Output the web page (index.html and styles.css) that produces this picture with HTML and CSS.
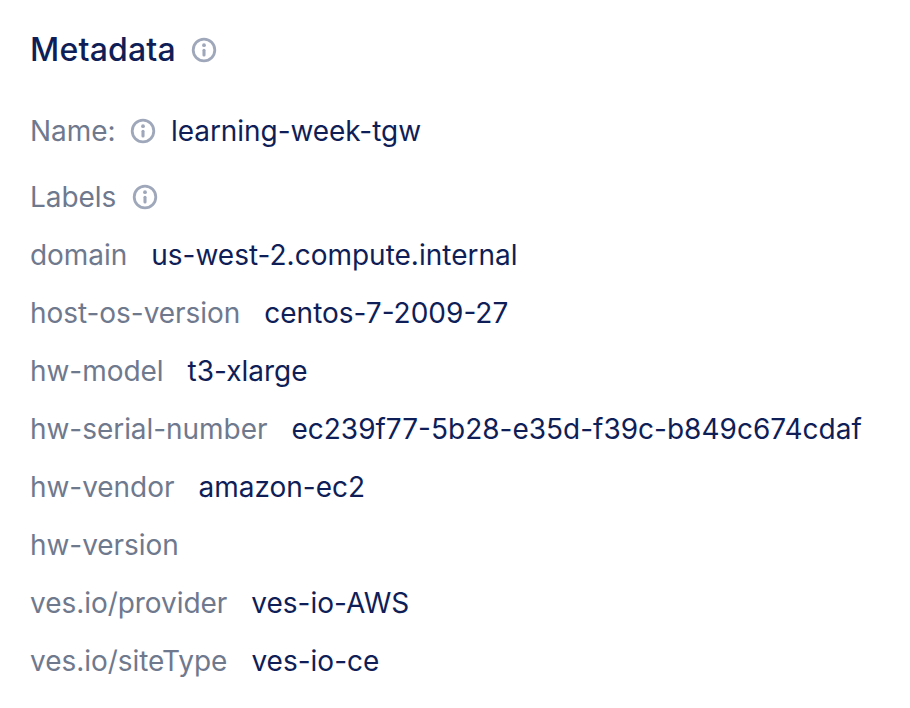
FILE: index.html
```html
<!DOCTYPE html>
<html lang="en">
<head>
<meta charset="utf-8">
<title>Metadata</title>
<link rel="stylesheet" href="styles.css">
</head>
<body>
<svg class="defs" aria-hidden="true"><symbol id="info" viewBox="0 0 24 24" overflow="visible"><circle cx="12" cy="12" r="10.8" fill="none" stroke="currentColor" stroke-width="2.8"/><circle cx="12" cy="7.2" r="1.9" fill="currentColor"/><path d="M12 12.2V17" fill="none" stroke="currentColor" stroke-width="3.1" stroke-linecap="round"/></symbol></svg>
<main class="metadata">
<header class="heading"><h1>Metadata</h1><svg class="icon"><use href="#info"/></svg></header>
<div class="name"><span class="key">Name:</span><svg class="icon"><use href="#info"/></svg><span class="value">learning-week-tgw</span></div>
<div class="labels"><span class="key">Labels</span><svg class="icon"><use href="#info"/></svg></div>
<dl class="list">
<div class="row"><dt>domain</dt><dd>us-west-2.compute.internal</dd></div>
<div class="row"><dt>host-os-version</dt><dd>centos-7-2009-27</dd></div>
<div class="row"><dt>hw-model</dt><dd>t3-xlarge</dd></div>
<div class="row"><dt>hw-serial-number</dt><dd>ec239f77-5b28-e35d-f39c-b849c674cdaf</dd></div>
<div class="row"><dt>hw-vendor</dt><dd>amazon-ec2</dd></div>
<div class="row"><dt>hw-version</dt><dd></dd></div>
<div class="row"><dt>ves.io/provider</dt><dd>ves-io-AWS</dd></div>
<div class="row"><dt>ves.io/siteType</dt><dd>ves-io-ce</dd></div>
</dl>
</main>
</body>
</html>
```
FILE: styles.css
```css
* { box-sizing: border-box; }
body { margin: 0; background: #fff; color: #0f1e57; font: 400 28px/34px Inter, sans-serif; }
.defs { position: absolute; width: 0; height: 0; }
.metadata { padding: 30px; white-space: nowrap; }
.heading, .name, .labels, .row { display: flex; align-items: center; }
.heading { height: 40px; gap: 16px; }
h1 { margin: 0; font-size: 32px; font-weight: 500; line-height: 40px; letter-spacing: 0.2px; }
.icon { flex: none; width: 24px; height: 24px; color: #9fa8ba; overflow: visible; }
.name .icon, .labels .icon { margin-bottom: 1px; }
.name { height: 34px; margin-top: 44px; gap: 16px; }
.name .key { margin-right: -0.5px; }
.name .value { letter-spacing: -0.06px; }
.labels { height: 34px; margin-top: 32px; gap: 16.5px; }
.key, dt { color: #6f798e; letter-spacing: -0.05px; }
.list { margin: 12px 0 0; }
.row { height: 58px; gap: 24px; }
dd { margin: 0; }
```
